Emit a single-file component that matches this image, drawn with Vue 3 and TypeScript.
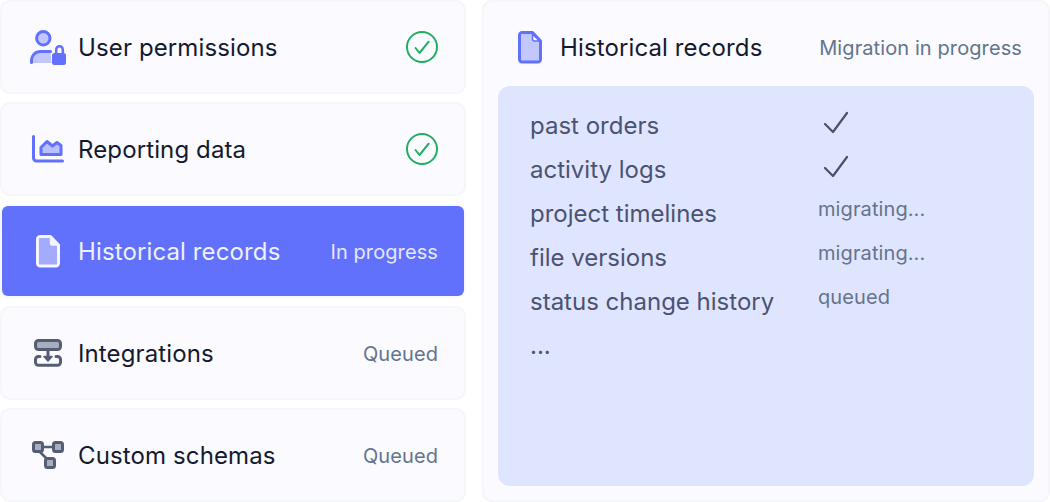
<script setup lang="ts">
type Status = 'done' | 'active' | 'queued'

interface Row {
  name: string
  icon: string
  status: Status
}

const rows: Row[] = [
  { name: 'User permissions', icon: 'user', status: 'done' },
  { name: 'Reporting data', icon: 'chart', status: 'done' },
  { name: 'Historical records', icon: 'file', status: 'active' },
  { name: 'Integrations', icon: 'inbox', status: 'queued' },
  { name: 'Custom schemas', icon: 'nodes', status: 'queued' }
]

const records = [
  { name: 'past orders', state: 'check' },
  { name: 'activity logs', state: 'check' },
  { name: 'project timelines', state: 'migrating...' },
  { name: 'file versions', state: 'migrating...' },
  { name: 'status change history', state: 'queued' },
  { name: '...', state: '' }
]
</script>

<template>
  <div class="page">
    <div class="list">
      <div v-for="row in rows" :key="row.name" class="row" :class="{ active: row.status === 'active' }">
        <div class="row-inner">
          <span class="icon">
            <svg v-if="row.icon === 'user'" width="36" height="35" viewBox="0 0 36 35">
              <circle cx="13.300" cy="8.300" r="6.700" fill="#c2c8fd" stroke="#6271fb" stroke-width="3" />
              <path d="M1.500 33v-2a9 9 0 0 1 9-9.500h10l1 11.500z" fill="#c2c8fd" />
              <path d="M1.500 32.500V31a9 9 0 0 1 9-9.500h10" fill="none" stroke="#6271fb" stroke-width="3" stroke-linecap="round" />
              <rect x="22" y="23" width="14" height="12" rx="2.500" fill="#6271fb" />
              <path d="M26.200 24v-4.500a3.300 3.300 0 0 1 6.600 0V24" fill="none" stroke="#6271fb" stroke-width="2.500" />
            </svg>
            <svg v-else-if="row.icon === 'chart'" width="32" height="28" viewBox="0 0 32 28">
              <path d="M9 19.500v-7l6-6 5.500 4.500 4.500-3.500 4 3v9z" fill="#b9c0fd" stroke="#6271fb" stroke-width="3" stroke-linejoin="round" />
              <path d="M1.500 1.500V23a3 3 0 0 0 3 3h26" fill="none" stroke="#6271fb" stroke-width="3" stroke-linecap="round" />
            </svg>
            <svg v-else-if="row.icon === 'file'" width="24" height="33" viewBox="0 0 24 33">
              <path d="M4 1.500h10.500l8 8.500v18.500a2.500 2.500 0 0 1-2.500 2.500H4a2.500 2.500 0 0 1-2.500-2.500V4A2.500 2.500 0 0 1 4 1.500z" fill="#a3abff" stroke="#f4f5ff" stroke-width="3" stroke-linejoin="round" />
              <path d="M14.500 3v5a2 2 0 0 0 2 2h5z" fill="#f4f5ff" stroke="#f4f5ff" stroke-width="1.500" />
            </svg>
            <svg v-else-if="row.icon === 'inbox'" width="28" height="28" viewBox="0 0 28 28">
              <rect x="1.500" y="1.500" width="25" height="9" rx="3" fill="#a8adbd" stroke="#545d74" stroke-width="3" />
              <path d="M6 17.500H4.500a3 3 0 0 0-3 3v2.700a3 3 0 0 0 3 3h19a3 3 0 0 0 3-3v-2.700a3 3 0 0 0-3-3H22" fill="none" stroke="#545d74" stroke-width="3" stroke-linecap="round" />
              <path d="M14 11v8" stroke="#545d74" stroke-width="3" />
              <path d="M10 17.500h8L14 22z" fill="#545d74" stroke="#545d74" stroke-width="1.500" stroke-linejoin="round" />
            </svg>
            <svg v-else width="32" height="28" viewBox="0 0 32 28">
              <path d="M10 6h12M8 11l8 8" stroke="#545d74" stroke-width="2.500" fill="none" />
              <rect x="1.500" y="1.500" width="9" height="9" rx="2" fill="#a8adbd" stroke="#545d74" stroke-width="3" />
              <rect x="21.500" y="1.500" width="9" height="9" rx="2" fill="#a8adbd" stroke="#545d74" stroke-width="3" />
              <rect x="13.500" y="17.500" width="9" height="9" rx="2" fill="#a8adbd" stroke="#545d74" stroke-width="3" />
            </svg>
          </span>
          <span class="name">{{ row.name }}</span>
          <svg v-if="row.status === 'done'" class="done" width="32" height="32" viewBox="0 0 32 32">
            <circle cx="16" cy="16" r="15" fill="none" stroke="#22ae62" stroke-width="2" />
            <path d="M9.500 17l4 5L22.700 10.700" fill="none" stroke="#22ae62" stroke-width="2" stroke-linecap="round" stroke-linejoin="round" />
          </svg>
          <span v-else-if="row.status === 'active'" class="status">In progress</span>
          <span v-else class="status">Queued</span>
        </div>
      </div>
    </div>

    <div class="panel">
      <div class="panel-head">
        <svg class="head-icon" width="24" height="33" viewBox="0 0 24 33">
          <path d="M4 1.500h10.500l8 8.500v18.500a2.500 2.500 0 0 1-2.500 2.500H4a2.500 2.500 0 0 1-2.500-2.500V4A2.500 2.500 0 0 1 4 1.500z" fill="#c2c8fd" stroke="#6271fb" stroke-width="3" stroke-linejoin="round" />
          <path d="M14.500 3v5a2 2 0 0 0 2 2h5z" fill="#fafaff" stroke="#6271fb" stroke-width="1.500" />
        </svg>
        <span class="name">Historical records</span>
        <span class="head-status">Migration in progress</span>
      </div>
      <div class="records">
        <div v-for="item in records" :key="item.name" class="record">
          <span class="record-name">{{ item.name }}</span>
          <svg v-if="item.state === 'check'" class="tick" width="26" height="24" viewBox="0 0 26 24">
            <path d="M2 13l8 8L24 2" fill="none" stroke="#4b5268" stroke-width="2.200" stroke-linecap="round" stroke-linejoin="round" />
          </svg>
          <span v-else class="record-state">{{ item.state }}</span>
        </div>
      </div>
    </div>
  </div>
</template>

<style scoped>
.page {
  display: flex;
  gap: 16px;
  width: 1050px;
  height: 502px;
  overflow: hidden;
  font-family: Inter, "Liberation Sans", sans-serif;
  background: #ffffff;
}

.list {
  display: flex;
  flex-direction: column;
  gap: 8px;
  width: 466px;
}

.row {
  height: 94px;
  box-sizing: border-box;
  border: 2px solid #f5f6fa;
  border-radius: 10px;
  background: #fafaff;
}

.row-inner {
  display: flex;
  align-items: center;
  height: 100%;
  padding: 0 26px 0 28px;
}

.row.active {
  border-color: #f7f8fc;
}

.row.active .row-inner {
  background: #6271fb;
  border-radius: 6px;
}

.icon {
  display: flex;
  justify-content: center;
  align-items: center;
  width: 36px;
  margin-right: 12px;
}

.name {
  margin-top: 2px;
  font-size: 24px;
  line-height: 32px;
  font-weight: 400;
  letter-spacing: 0.12px;
  color: #141a2e;
}

.active .name {
  color: #eef0ff;
}

.done {
  margin-left: auto;
}

.status {
  margin-left: auto;
  margin-top: 2px;
  font-size: 20px;
  line-height: 28px;
  letter-spacing: 0.1px;
  color: #64748b;
}

.active .status {
  color: #e4e7ff;
}

.panel {
  box-sizing: border-box;
  width: 568px;
  height: 502px;
  border: 2px solid #f5f6fa;
  border-radius: 10px;
  background: #fafaff;
  padding: 0 14px 14px;
  display: flex;
  flex-direction: column;
}

.panel-head {
  box-sizing: border-box;
  display: flex;
  align-items: center;
  height: 84px;
  padding: 6px 12px 0 20px;
}

.head-icon {
  margin-right: 18px;
}

.head-status {
  margin-left: auto;
  margin-top: 2px;
  font-size: 20px;
  line-height: 28px;
  letter-spacing: 0.1px;
  color: #64748b;
}

.records {
  flex: 1;
  background: #e0e5ff;
  border-radius: 12px;
  padding: 18px 32px;
}

.record {
  display: flex;
  align-items: center;
  height: 44px;
}

.record-name {
  width: 288px;
  font-size: 24px;
  line-height: 32px;
  color: #4a5372;
}

.record-state {
  font-size: 20px;
  line-height: 28px;
  letter-spacing: 0.1px;
  color: #64748b;
  margin-top: -10px;
}

.tick {
  margin-left: 5px;
  margin-top: -6px;
}
</style>
